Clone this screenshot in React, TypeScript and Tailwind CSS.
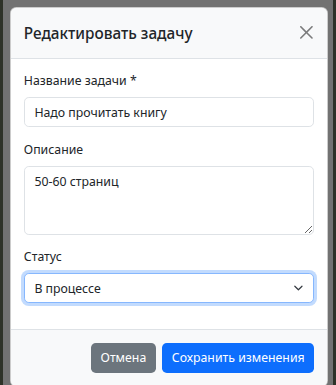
import { useState } from "react";

export default function App() {
  const [title, setTitle] = useState("Надо прочитать книгу");
  const [desc, setDesc] = useState("50-60 страниц");
  const [status, setStatus] = useState("in_progress");

  return (
    <div
      className="w-[336px] h-[385px] overflow-hidden bg-[#727272] border-l-[3px] border-r-[3px] border-[#2e3228] pt-[7px] pl-[7px] pr-[5px] text-[#212529] text-[12.3px] leading-[19.2px]"
      style={{ fontFamily: '"Noto Sans", "Open Sans", sans-serif' }}
    >
      <div className="bg-white rounded-[6.4px] border border-black/20 overflow-hidden">
        {/* Header */}
        <div className="flex items-center justify-between bg-[#f8f9fa] border-b border-[#dee2e6] p-[12.8px]">
          <h5 className="text-[15.3px] leading-[24px] font-medium">Редактировать задачу</h5>
          <button className="w-[12.8px] h-[12.8px] mr-[1px] opacity-50" aria-label="Close">
            <svg viewBox="0 0 16 16" className="w-[12.8px] h-[12.8px]">
              <path
                fill="#000"
                d="M.293.293a1 1 0 0 1 1.414 0L8 6.586 14.293.293a1 1 0 1 1 1.414 1.414L9.414 8l6.293 6.293a1 1 0 0 1-1.414 1.414L8 9.414l-6.293 6.293a1 1 0 0 1-1.414-1.414L6.586 8 .293 1.707a1 1 0 0 1 0-1.414z"
              />
            </svg>
          </button>
        </div>

        {/* Body */}
        <div className="p-[12.8px]">
          <div className="mb-[12.8px]">
            <label className="block mb-[6.4px]">Название задачи *</label>
            <input
              value={title}
              onChange={(e) => setTitle(e.target.value)}
              className="block w-full h-[30.4px] px-[9.6px] border border-[#dee2e6] rounded-[4.8px] bg-white outline-none"
            />
          </div>
          <div className="mb-[12.8px]">
            <label className="block mb-[6.4px]">Описание</label>
            <textarea
              value={desc}
              onChange={(e) => setDesc(e.target.value)}
              className="block w-full h-[68.8px] px-[9.6px] py-[4.8px] border border-[#dee2e6] rounded-[4.8px] bg-white outline-none resize-y"
            />
          </div>
          <div className="mb-[12.8px]">
            <label className="block mb-[6.4px]">Статус</label>
            <div className="relative">
              <select
                value={status}
                onChange={(e) => setStatus(e.target.value)}
                className="block w-full h-[30.4px] pl-[9.6px] pr-[36px] appearance-none border border-[#86b7fe] rounded-[4.8px] bg-white outline-none shadow-[0_0_0_3px_rgba(13,110,253,0.25)]"
              >
                <option value="new">Новая</option>
                <option value="in_progress">В процессе</option>
                <option value="done">Завершена</option>
              </select>
              <svg
                viewBox="0 0 16 16"
                className="absolute right-[9.6px] top-1/2 -translate-y-1/2 w-[12.8px] h-[9.6px] pointer-events-none"
              >
                <path d="m2 5 6 6 6-6" fill="none" stroke="#343a40" strokeWidth="2" strokeLinecap="round" strokeLinejoin="round" />
              </svg>
            </div>
          </div>
        </div>

        {/* Footer */}
        <div className="flex justify-end gap-[6.4px] bg-[#f8f9fa] border-t border-[#dee2e6] p-[12.8px]">
          <button className="h-[30.4px] px-[9.6px] rounded-[4.8px] bg-[#6c757d] text-white">Отмена</button>
          <button className="h-[30.4px] px-[9.6px] rounded-[4.8px] bg-[#0d6efd] text-white">Сохранить изменения</button>
        </div>
      </div>
    </div>
  );
}
